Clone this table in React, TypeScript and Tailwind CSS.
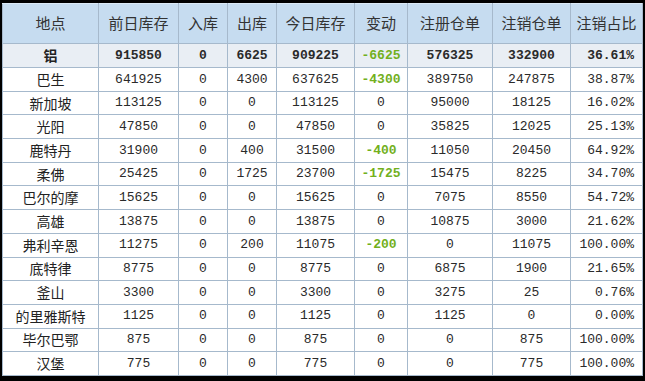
const headers = ["地点", "前日库存", "入库", "出库", "今日库存", "变动", "注册仓单", "注销仓单", "注销占比"];

const total = ["铝", "915850", "0", "6625", "909225", "-6625", "576325", "332900", "36.61%"];

const rows = [
  ["巴生", "641925", "0", "4300", "637625", "-4300", "389750", "247875", "38.87%"],
  ["新加坡", "113125", "0", "0", "113125", "0", "95000", "18125", "16.02%"],
  ["光阳", "47850", "0", "0", "47850", "0", "35825", "12025", "25.13%"],
  ["鹿特丹", "31900", "0", "400", "31500", "-400", "11050", "20450", "64.92%"],
  ["柔佛", "25425", "0", "1725", "23700", "-1725", "15475", "8225", "34.70%"],
  ["巴尔的摩", "15625", "0", "0", "15625", "0", "7075", "8550", "54.72%"],
  ["高雄", "13875", "0", "0", "13875", "0", "10875", "3000", "21.62%"],
  ["弗利辛恩", "11275", "0", "200", "11075", "-200", "0", "11075", "100.00%"],
  ["底特律", "8775", "0", "0", "8775", "0", "6875", "1900", "21.65%"],
  ["釜山", "3300", "0", "0", "3300", "0", "3275", "25", "0.76%"],
  ["的里雅斯特", "1125", "0", "0", "1125", "0", "1125", "0", "0.00%"],
  ["毕尔巴鄂", "875", "0", "0", "875", "0", "0", "875", "100.00%"],
  ["汉堡", "775", "0", "0", "775", "0", "0", "775", "100.00%"],
];

const cjk = "font-['Noto_Sans_CJK_SC',sans-serif]";
const mono = "font-['Liberation_Mono','DejaVu_Sans_Mono',monospace]";

function Cell({ value, col, bold }: { value: string; col: number; bold?: boolean }) {
  const neg = value.startsWith("-");
  const base = "border border-[#a6b9cc] p-0 whitespace-nowrap";
  if (col === 0) {
    return (
      <td className={base}>
        <div className={`flex justify-center text-[14px] text-[#222] ${cjk} ${bold ? "font-bold" : ""}`}>{value}</div>
      </td>
    );
  }
  return (
    <td className={base}>
      <div
        className={`flex ${col === 8 ? "justify-end pr-[8px]" : "justify-center"} ${mono} text-[13px] ${
          neg ? "font-bold text-[#72b01d]" : "text-[#2a2a2a]"
        } ${bold ? "font-bold" : ""}`}
      >
        {value}
      </div>
    </td>
  );
}

export default function App() {
  return (
    <div className="w-[645px] h-[381px] bg-black pt-[3px] pl-[2px] overflow-hidden">
      <table className="table-fixed border-collapse w-[640px] bg-white">
        <colgroup>
          <col className="w-[96px]" />
          <col className="w-[80px]" />
          <col className="w-[49px]" />
          <col className="w-[49px]" />
          <col className="w-[78px]" />
          <col className="w-[53px]" />
          <col className="w-[85px]" />
          <col className="w-[78px]" />
          <col className="w-[72px]" />
        </colgroup>
        <thead>
          <tr className="h-[40px] bg-[#c6dcf0]">
            {headers.map((h) => (
              <th
                key={h}
                className={`border border-[#a6b9cc] border-t-[#dbe9f6] p-0 text-center text-[15px] font-normal text-[#333] ${cjk}`}
              >
                {h}
              </th>
            ))}
          </tr>
        </thead>
        <tbody>
          <tr className="h-[24px] bg-[#e9eef4]">
            {total.map((v, i) => (
              <Cell key={i} value={v} col={i} bold />
            ))}
          </tr>
          {rows.map((r) => (
            <tr key={r[0]} className="h-[23.7px] bg-white">
              {r.map((v, i) => (
                <Cell key={i} value={v} col={i} />
              ))}
            </tr>
          ))}
        </tbody>
      </table>
    </div>
  );
}
